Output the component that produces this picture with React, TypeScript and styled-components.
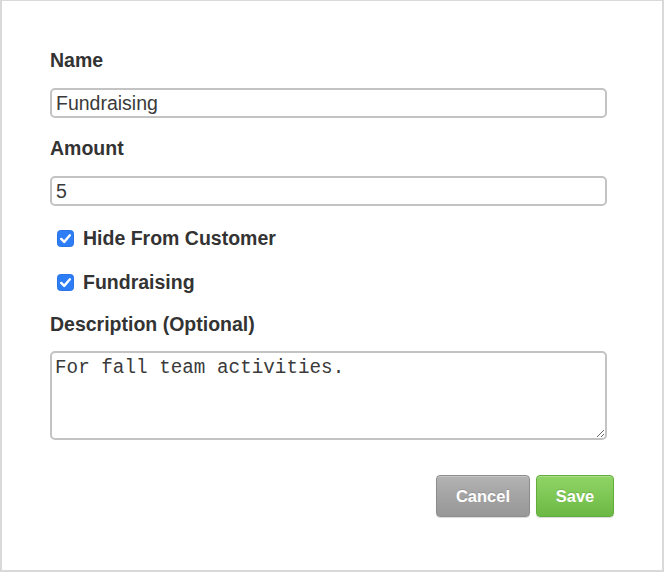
import React, {useState} from 'react'
import styled, {createGlobalStyle} from 'styled-components'

const GlobalStyle = createGlobalStyle`
  html, body {
    margin: 0;
    padding: 0;
    background: #ffffff;
  }
  body {
    font-family: 'Liberation Sans', Arial, Helvetica, sans-serif;
    color: #333333;
  }
`

type CheckProps = {
  label: string
  checked: boolean
  onToggle: () => void
}

const CheckField = ({label, checked, onToggle}: CheckProps) => (
  <CheckRow>
    <BoxWrap>
      <CheckInput type="checkbox" checked={checked} onChange={onToggle} />
      {checked && (
        <CheckMark viewBox="0 0 17 17">
          <path d="M4.2 8.9 L7.2 11.9 L12.9 5.3" />
        </CheckMark>
      )}
    </BoxWrap>
    <CheckLabel onClick={onToggle}>{label}</CheckLabel>
  </CheckRow>
)

const App = () => {
  const [name, setName] = useState('Fundraising')
  const [amount, setAmount] = useState('5')
  const [hidden, setHidden] = useState(true)
  const [fundraising, setFundraising] = useState(true)
  const [description, setDescription] = useState('For fall team activities.')

  return (
    <>
      <GlobalStyle />
      <Panel>
        <Form>
          <FieldLabel>Name</FieldLabel>
          <TextInput value={name} onChange={(e) => setName(e.target.value)} />
          <FieldLabel>Amount</FieldLabel>
          <TextInput value={amount} onChange={(e) => setAmount(e.target.value)} />
          <Checks>
            <CheckField
              label="Hide From Customer"
              checked={hidden}
              onToggle={() => setHidden(!hidden)}
            />
            <CheckField
              label="Fundraising"
              checked={fundraising}
              onToggle={() => setFundraising(!fundraising)}
            />
          </Checks>
          <FieldLabel>Description (Optional)</FieldLabel>
          <TextArea value={description} onChange={(e) => setDescription(e.target.value)} />
        </Form>
        <Footer>
          <Button variant="cancel">Cancel</Button>
          <Button variant="save">Save</Button>
        </Footer>
      </Panel>
    </>
  )
}

export default App

const Panel = styled.div`
  box-sizing: border-box;
  width: 664px;
  height: 572px;
  border: 2px solid #d9d9d9;
  border-top-width: 1px;
  background: #fff;
  display: flex;
  flex-direction: column;
`
const Form = styled.div`
  display: flex;
  flex-direction: column;
  padding: 47px 55px 0 48px;
`
const FieldLabel = styled.label`
  font-size: 19.5px;
  font-weight: 700;
  line-height: 24px;
  color: #333;
  margin-bottom: 16px;
`
const TextInput = styled.input`
  box-sizing: border-box;
  height: 30px;
  width: 100%;
  margin: 0 0 18px;
  padding: 0 4px;
  border: 2px solid #c3c3c3;
  border-radius: 5px;
  font-family: 'Liberation Sans', Arial, sans-serif;
  font-size: 19.5px;
  color: #3a3a3a;
  background: #fff;
  outline: none;
`
const Checks = styled.div`
  display: flex;
  flex-direction: column;
  gap: 20px;
  margin: 2px 0 18px;
`
const CheckRow = styled.div`
  display: flex;
  align-items: center;
  gap: 9px;
  height: 24px;
  padding-left: 7px;
`
const BoxWrap = styled.span`
  position: relative;
  width: 17px;
  height: 17px;
  flex: none;
`
const CheckInput = styled.input`
  appearance: none;
  margin: 0;
  width: 17px;
  height: 17px;
  border-radius: 3.5px;
  background: #2d7df6;
  border: 1px solid #2a74e4;
  box-sizing: border-box;
  cursor: pointer;

  &:not(:checked) {
    background: #fff;
    border-color: #9a9a9a;
  }
`
const CheckMark = styled.svg`
  position: absolute;
  left: 0;
  top: 0;
  width: 17px;
  height: 17px;
  pointer-events: none;

  path {
    fill: none;
    stroke: #fff;
    stroke-width: 2.4;
    stroke-linecap: round;
    stroke-linejoin: round;
  }
`
const CheckLabel = styled.span`
  font-size: 19.5px;
  font-weight: 700;
  line-height: 24px;
  color: #333;
  cursor: pointer;
`
const TextArea = styled.textarea`
  box-sizing: border-box;
  width: 100%;
  height: 89px;
  margin: -1px 0 0;
  padding: 4px 3px;
  border: 2px solid #c3c3c3;
  border-radius: 5px;
  font-family: 'Liberation Mono', 'Courier New', monospace;
  font-size: 19.3px;
  line-height: 23px;
  color: #3a3a3a;
  resize: vertical;
  outline: none;
`
const Footer = styled.div`
  display: flex;
  justify-content: flex-end;
  gap: 6px;
  padding: 35px 48px 0 0;
`
const Button = styled.button<{variant: 'cancel' | 'save'}>`
  box-sizing: border-box;
  height: 42px;
  padding: 0;
  width: ${(p) => (p.variant === 'cancel' ? '94px' : '78px')};
  border-radius: 4px;
  border: 1px solid ${(p) => (p.variant === 'cancel' ? '#8d8d8d' : '#62ac3c')};
  background: ${(p) =>
    p.variant === 'cancel'
      ? 'linear-gradient(#b3b3b3, #a2a2a2 55%, #979797)'
      : 'linear-gradient(#8fd466, #7cc653 55%, #6cb845)'};
  box-shadow: inset 0 1px 0 rgba(255, 255, 255, 0.25), 0 1px 1px rgba(0, 0, 0, 0.15);
  color: #fff;
  font-family: 'Liberation Sans', Arial, sans-serif;
  font-size: 16.5px;
  font-weight: 700;
  text-shadow: 0 -1px 0 rgba(0, 0, 0, 0.15);
  cursor: pointer;
`
